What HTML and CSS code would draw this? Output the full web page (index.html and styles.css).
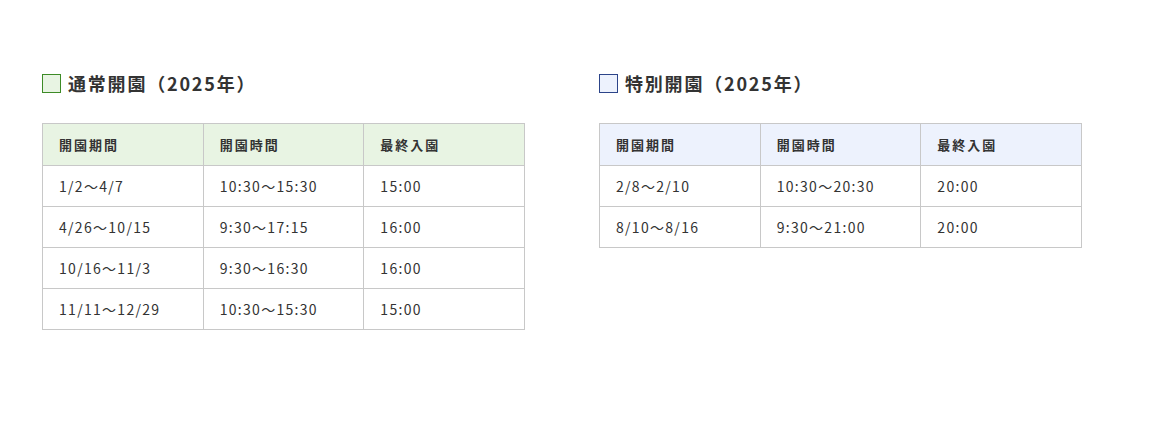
FILE: index.html
```html
<!DOCTYPE html>
<html lang="ja">
<head>
<meta charset="utf-8">
<link rel="stylesheet" href="styles.css">
</head>
<body>
<main class="page">
  <section class="block">
    <h2 class="title"><span class="mark mark-green"></span>通常開園（2025年）</h2>
    <table class="hours hours-green">
      <thead>
        <tr><th>開園期間</th><th>開園時間</th><th>最終入園</th></tr>
      </thead>
      <tbody>
        <tr><td>1/2〜4/7</td><td>10:30〜15:30</td><td>15:00</td></tr>
        <tr><td>4/26〜10/15</td><td>9:30〜17:15</td><td>16:00</td></tr>
        <tr><td>10/16〜11/3</td><td>9:30〜16:30</td><td>16:00</td></tr>
        <tr><td>11/11〜12/29</td><td>10:30〜15:30</td><td>15:00</td></tr>
      </tbody>
    </table>
  </section>
  <section class="block">
    <h2 class="title"><span class="mark mark-blue"></span>特別開園（2025年）</h2>
    <table class="hours hours-blue">
      <thead>
        <tr><th>開園期間</th><th>開園時間</th><th>最終入園</th></tr>
      </thead>
      <tbody>
        <tr><td>2/8〜2/10</td><td>10:30〜20:30</td><td>20:00</td></tr>
        <tr><td>8/10〜8/16</td><td>9:30〜21:00</td><td>20:00</td></tr>
      </tbody>
    </table>
  </section>
</main>
</body>
</html>
```

FILE: styles.css
```css
html, body {
  margin: 0;
  padding: 0;
  background: #ffffff;
}
body {
  font-family: "Noto Sans CJK JP", "Noto Sans", sans-serif;
  color: #333333;
}
.page {
  display: flex;
  gap: 74px;
  padding: 74px 42px 0 42px;
}
.block {
  width: 483px;
}
.title {
  display: flex;
  align-items: center;
  gap: 7px;
  margin: 0 0 30px 0;
  height: 19px;
  font-size: 18px;
  font-weight: 700;
  letter-spacing: 1.8px;
  line-height: 19px;
  color: #333333;
}
.mark {
  display: block;
  width: 17px;
  height: 17px;
  flex: none;
}
.mark-green {
  border: 1px solid #3d8b26;
  background: #e8f4e3;
}
.mark-blue {
  border: 1px solid #2c4489;
  background: #edf2fd;
}
.hours {
  width: 483px;
  border-collapse: collapse;
  table-layout: fixed;
}
.hours th,
.hours td {
  border: 1px solid #c8c8c8;
  height: 41px;
  padding: 0 0 0 16px;
  text-align: left;
  box-sizing: border-box;
  vertical-align: middle;
}
.hours th {
  height: 42px;
  font-size: 13px;
  font-weight: 700;
  letter-spacing: 2px;
}
.hours td {
  font-size: 14px;
  font-weight: 400;
  letter-spacing: 1.3px;
}
.hours-green th {
  background: #e8f4e3;
}
.hours-blue th {
  background: #edf2fd;
}
```
